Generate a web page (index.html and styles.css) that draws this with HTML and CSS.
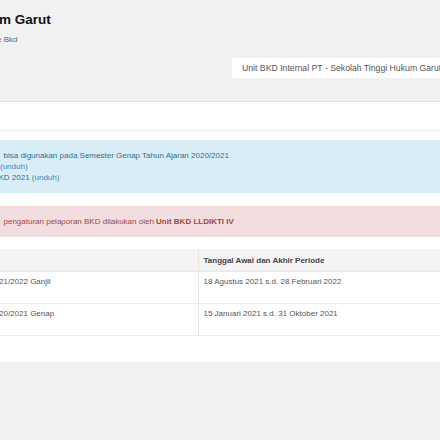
FILE: index.html
```html
<!DOCTYPE html>
<html lang="id">
<head>
<meta charset="utf-8">
<title>BKD</title>
<link rel="stylesheet" href="styles.css">
</head>
<body>
  <header class="page-header">
    <h1 class="title">m Garut</h1>
    <div class="subtitle">e Bkd</div>
  </header>
  <div class="toolbar">
    <div class="unit-select">Unit BKD Internal PT - Sekolah Tinggi Hukum Garut</div>
  </div>
  <section class="panel">
    <div class="panel-heading"></div>
    <div class="panel-body">
      <div class="alert alert-info">
        <div class="line l1">bisa digunakan pada Semester Genap Tahun Ajaran 2020/2021</div>
        <div class="line l2"><a class="link">(unduh)</a></div>
        <div class="line l3">KD 2021 <a class="link">(unduh)</a></div>
      </div>
      <div class="alert alert-danger">
        <div class="line l1">pengaturan pelaporan BKD dilakukan oleh <strong>Unit BKD LLDIKTI IV</strong></div>
      </div>
      <table class="table">
        <thead>
          <tr><th class="c1"></th><th class="c2">Tanggal Awal dan Akhir Periode</th></tr>
        </thead>
        <tbody>
          <tr><td class="c1"><span class="cut">21/2022 Ganjil</span></td><td class="c2">18 Agustus 2021 s.d. 28 Februari 2022</td></tr>
          <tr><td class="c1"><span class="cut">20/2021 Genap</span></td><td class="c2">15 Januari 2021 s.d. 31 Oktober 2021</td></tr>
        </tbody>
      </table>
    </div>
  </section>
</body>
</html>
```

FILE: styles.css
```css
html, body {
  margin: 0;
  padding: 0;
}
body {
  width: 440px;
  height: 440px;
  overflow: hidden;
  background: #f1f1f1;
  font-family: "Liberation Sans", Arial, sans-serif;
  color: #333;
}
.page-header {
  padding-top: 12px;
  white-space: nowrap;
}
.title {
  margin: 0 0 0 -1px;
  font-size: 13.5px;
  line-height: 16px;
  font-weight: bold;
  color: #111;
}
.subtitle {
  margin: 7px 0 0 -3px;
  font-size: 8px;
  line-height: 10px;
  color: #666;
}
.toolbar {
  margin-top: 13px;
  padding-left: 232px;
  white-space: nowrap;
}
.unit-select {
  width: 260px;
  height: 20px;
  line-height: 20px;
  padding-left: 10px;
  background: #fff;
  font-size: 8.7px;
  color: #555;
}
.panel {
  margin-top: 23px;
  background: #fff;
  border-top: 1px solid #e2e4e7;
}
.panel-heading {
  height: 28px;
  border-bottom: 1px solid #eeeeee;
}
.panel-body {
  padding: 9px 0 26px 0;
}
.alert {
  padding: 10px 0;
  font-size: 8px;
  line-height: 11px;
  white-space: nowrap;
  overflow: hidden;
}
.alert-info {
  background: #d9edf7;
  color: #31708f;
  margin-bottom: 13px;
}
.alert-danger {
  background: #f2dede;
  color: #a94442;
  margin-bottom: 12px;
}
.alert .l1 { padding-left: 3.5px; }
.alert .l2 { padding-left: 0; }
.alert .l3 { margin-left: -1.5px; }
.link {
  color: #3a87c0;
}
.table {
  width: 100%;
  border-collapse: collapse;
  font-size: 8px;
  line-height: 11px;
}
.table th {
  background: #f4f4f4;
  text-align: left;
  font-weight: bold;
  color: #444;
  padding: 6px 5px 4px 5px;
  border-bottom: 2px solid #e9e9e9;
}
.table td {
  padding: 4px 5px 16px 5px;
  vertical-align: top;
  color: #555;
  border-bottom: 1px solid #ececec;
  white-space: nowrap;
}
.table .c1 {
  width: 198px;
  box-sizing: border-box;
  border-right: 1px solid #e6e6e6;
}
.table td.c1 {
  padding-left: 0;
}
.cut {
  display: inline-block;
  margin-left: -1px;
}
```
